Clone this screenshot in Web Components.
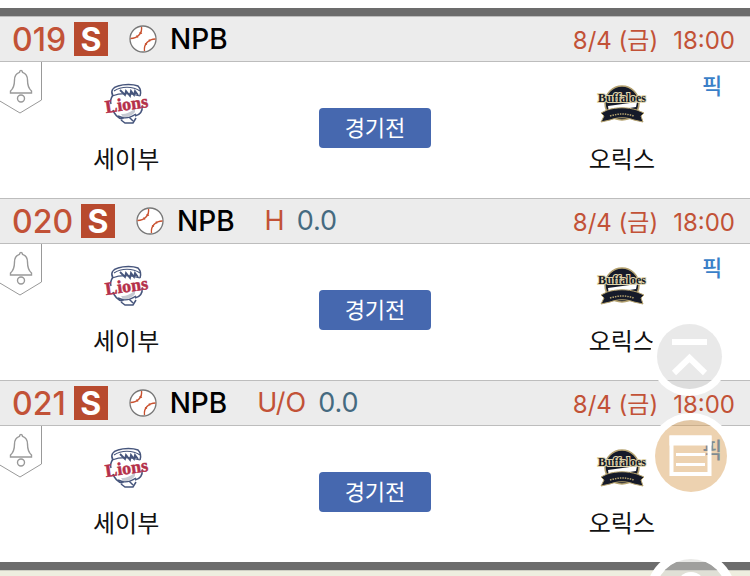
<!DOCTYPE html>
<html lang="ko">
<head>
<meta charset="utf-8">
<meta name="viewport" content="width=device-width, initial-scale=1">
<title>NPB</title>
<style>
  body { margin: 0; background: #eeeedf; font-family: Inter, "Noto Sans CJK KR", sans-serif; color: #111; overflow: hidden; }
</style>
</head>
<body>
<game-list>
  <game-row number="019" league="NPB" date="8/4 (금)" time="18:00" home="세이부" away="오릭스" status="경기전"></game-row>
  <game-row number="020" league="NPB" kind="H" line="0.0" date="8/4 (금)" time="18:00" home="세이부" away="오릭스" status="경기전"></game-row>
  <game-row number="021" league="NPB" kind="U/O" line="0.0" date="8/4 (금)" time="18:00" home="세이부" away="오릭스" status="경기전"></game-row>
</game-list>
<quick-menu></quick-menu>

<script>
class BallIcon extends HTMLElement {
  constructor() {
    super();
    this.attachShadow({ mode: "open" });
    this.shadowRoot.innerHTML = `
      <style>
        :host { display: block; width: 28px; height: 28px; }
        svg { display: block; }
      </style>
      <svg width="28" height="28" viewBox="0 0 28 28" fill="none" aria-hidden="true">
        <circle cx="14" cy="14" r="13" fill="#fff" stroke="#777" stroke-width="1.3"/>
        <g stroke="#c9512f" stroke-width="1.4">
          <path d="M12.500 2C13.500 8 8.500 13.500 1.500 13.500"/>
          <path d="M26.500 14C19.500 14 14.500 19.500 15.500 26"/>
          <path d="M10.500 7.500l2.500 1M7.500 10.500l1.500 2M20 14.500l1 2M16 18.500l2 1" stroke-width="1.2"/>
        </g>
      </svg>
    `;
  }
}
customElements.define("ball-icon", BallIcon);

class AlarmTag extends HTMLElement {
  constructor() {
    super();
    this.attachShadow({ mode: "open" });
    this.shadowRoot.innerHTML = `
      <style>
        :host { display: block; }
        button { display: block; padding: 0; border: 0; background: none; cursor: pointer; }
        svg { display: block; }
      </style>
      <button type="button" aria-label="알림">
        <svg width="44" height="54" viewBox="0 0 44 54" fill="none" stroke="#999">
          <path d="M41.500 0V38L20 51L-1 38.500" stroke-width="1"/>
          <path d="M21 8.500c-1 0-1.500.8-1.500 1.800C16 11.500 14.500 14 14.500 18c0 6-1 8.500-4 11v2h21v-2c-3-2.500-4-5-4-11c0-4-1.500-6.500-5-7.700c0-1-.5-1.800-1.500-1.800z" stroke-width="1.400"/>
          <circle cx="21" cy="36.500" r="3.500" stroke-width="1.400"/>
        </svg>
      </button>
    `;
  }
}
customElements.define("alarm-tag", AlarmTag);

const LOGOS = {
  lions: `
    <svg width="56" height="42" viewBox="-3 0 56 42" aria-hidden="true">
      <g fill="none" stroke="#46557c" stroke-width="1.500">
        <path d="M12 13C9 8 12 4 17 3C23 1 32 1 37 3C40 6 40 10 39 13"/>
        <path d="M13 8C20 3 32 3 39 8" stroke-width="1.200"/>
        <path d="M19 7l5 5 1-4 4 5 1-5 3 4 1-4 3 4" stroke-width="1.800"/>
        <path d="M11 13c8-3 18-3 28 0" stroke-width="1.200"/>
        <path d="M12 12c-2 3-3 6-2 9M41 23c1 5-2 9-7 10M12 27c1 4 5 8 9 9"/>
        <path d="M17 33c6 3 12 2 18-2M20 37l4 3h8l3-5M28 34l4 4M21 36l6-4" stroke-width="1.500"/>
      </g>
      <path d="M20 31c6 0 10-2 14-6v4c-3 4-8 6-12 5z" fill="#c7cbd3"/>
      <text x="5" y="30" transform="rotate(-8 5 30)" font-family="Liberation Serif, serif" font-weight="700" font-size="18" fill="#b5304a" stroke="#b5304a" stroke-width=".5">Lions</text>
    </svg>`,
  buffaloes: `
    <svg width="52" height="42" viewBox="0 0 52 42" aria-hidden="true">
      <circle cx="26" cy="20" r="17" fill="#151a29" stroke="#b5a26f" stroke-width="1.500"/>
      <path d="M12 23l29-4-1 5-13 2-14 4z" fill="#fff"/>
      <path d="M5 30l6-3c10-3 20-3 30 0l7 3-3 3 2 6-9-2c-8-3-16-3-24 0l-9 2 3-6z" fill="#151a29" stroke="#b5a26f" stroke-width="1"/>
      <path d="M14 33q12-4 24 0" fill="none" stroke="#b5a26f" stroke-width="1.500" stroke-dasharray="1.500 1"/>
      <text x="26" y="19" text-anchor="middle" font-family="Liberation Serif, serif" font-weight="700" font-size="12" fill="#151a29" stroke="#e2d5aa" stroke-width="2" paint-order="stroke">Buffaloes</text>
    </svg>`
};

class TeamBadge extends HTMLElement {
  connectedCallback() {
    this.attachShadow({ mode: "open" });
    this.shadowRoot.innerHTML = `
      <style>
        :host { display: flex; flex-direction: column; align-items: center; gap: 17px; padding-top: 21px; font-size: 24px; line-height: 36px; }
        svg { display: block; }
      </style>
      ${LOGOS[this.getAttribute("logo")]}
      <slot></slot>
    `;
  }
}
customElements.define("team-badge", TeamBadge);

class GameRow extends HTMLElement {
  connectedCallback() {
    this.attachShadow({ mode: "open" });
    this.render();
  }

  render() {
    const get = (name) => this.getAttribute(name) || "";
    const line = get("kind")
      ? `<span class="kind">${get("kind")}</span><span class="line">${get("line")}</span>`
      : "";

    this.shadowRoot.innerHTML = `
      <style>
        :host { display: block; background: #fff; }
        header { display: flex; align-items: center; height: 44px; padding: 0 15px 0 12px; border: solid #bdbdbd; border-width: 1px 0; background: #ececec; color: #c25237; font-size: 28px; }
        .number { font-size: 32px; font-weight: 500; }
        .badge { width: 34px; height: 34px; margin-left: 8px; background: #b84a2e; color: #fff; font-size: 32px; font-weight: 700; line-height: 36px; text-align: center; }
        ball-icon { margin-left: 21px; }
        .league { margin-left: 13px; color: #000; font-weight: 500; line-height: 46px; }
        .kind { margin-left: 30px; font-size: 27px; line-height: 46px; }
        .line { margin-left: 12px; color: #456a80; font-size: 27px; line-height: 46px; }
        .when { display: flex; align-items: baseline; gap: 15px; margin-left: auto; font-size: 24px; line-height: 46px; }
        .when > span { line-height: 44px; padding-top: 3px; }
        .body { display: grid; grid-template-columns: 48px 1fr 112px 1fr 48px; height: 136px; }
        .home { justify-self: start; margin-left: 45px; }
        .away { justify-self: end; margin-right: 47px; }
        .status { align-self: start; height: 40px; margin-top: 46px; padding: 0; border: 0; border-radius: 4px; background: #4668af; color: #fff; font: inherit; font-size: 22px; line-height: 38px; cursor: pointer; }
        .pick { justify-self: start; margin-top: 8px; height: 32px; color: #3a7fc8; font-size: 22px; font-weight: 500; line-height: 32px; text-decoration: none; }
      </style>
      <header>
        <span class="number">${get("number")}</span>
        <span class="badge">S</span>
        <ball-icon></ball-icon>
        <span class="league">${get("league")}</span>
        ${line}
        <span class="when">
          <span>${get("date")}</span>
          <span>${get("time")}</span>
        </span>
      </header>
      <div class="body">
        <alarm-tag></alarm-tag>
        <team-badge class="home" logo="lions">${get("home")}</team-badge>
        <button class="status" type="button">${get("status")}</button>
        <team-badge class="away" logo="buffaloes">${get("away")}</team-badge>
        <a class="pick" href="#">픽</a>
      </div>
    `;
  }
}
customElements.define("game-row", GameRow);

class GameList extends HTMLElement {
  constructor() {
    super();
    this.attachShadow({ mode: "open" });
    this.shadowRoot.innerHTML = `
      <style>
        :host { display: block; border-top: 8px solid #fff; }
        .rows { border: solid #6c6c6c; border-width: 8px 0; }
        .next { height: 1px; background: #cfcfc4; }
      </style>
      <div class="rows"><slot></slot></div>
      <div class="next"></div>
    `;
  }
}
customElements.define("game-list", GameList);

class QuickMenu extends HTMLElement {
  constructor() {
    super();
    this.attachShadow({ mode: "open" });
    this.shadowRoot.innerHTML = `
      <style>
        :host { position: fixed; top: 324px; right: 23px; display: flex; flex-direction: column; align-items: flex-end; gap: 31px; }
        button { display: block; width: 72px; height: 72px; padding: 0; border: 0; border-radius: 50%; background: rgba(215, 155, 79, .45); box-shadow: 0 0 0 7px #fff; cursor: pointer; }
        .top { width: 65px; height: 65px; margin-right: 5px; background: rgba(200, 200, 200, .4); }
        .more { margin-top: 36px; background: rgba(210, 210, 205, .5); box-shadow: 0 0 0 9px #fff; }
        svg { display: block; margin: auto; }
      </style>
      <button class="top" type="button" aria-label="맨 위로">
        <svg width="65" height="65" viewBox="0 0 65 65" fill="none" stroke="#fff" stroke-width="6">
          <path d="M15 18H50M17 49L32.500 34L48 49"/>
        </svg>
      </button>
      <button type="button" aria-label="목록">
        <svg width="72" height="72" viewBox="0 0 72 72" fill="none" stroke="#fff" stroke-width="4">
          <path d="M16.500 17.500H54.500V54H16.500Z"/>
          <path d="M14.500 20.500H56.500" stroke-width="10"/>
          <path d="M21 34.500H50M21 44.500H50" stroke-width="3"/>
        </svg>
      </button>
      <button class="more" type="button" aria-label="더보기">
        <svg width="72" height="72" viewBox="0 0 72 72"><circle cx="36" cy="27" r="14" fill="#fff"/></svg>
      </button>
    `;
  }
}
customElements.define("quick-menu", QuickMenu);
</script>
</body>
</html>
